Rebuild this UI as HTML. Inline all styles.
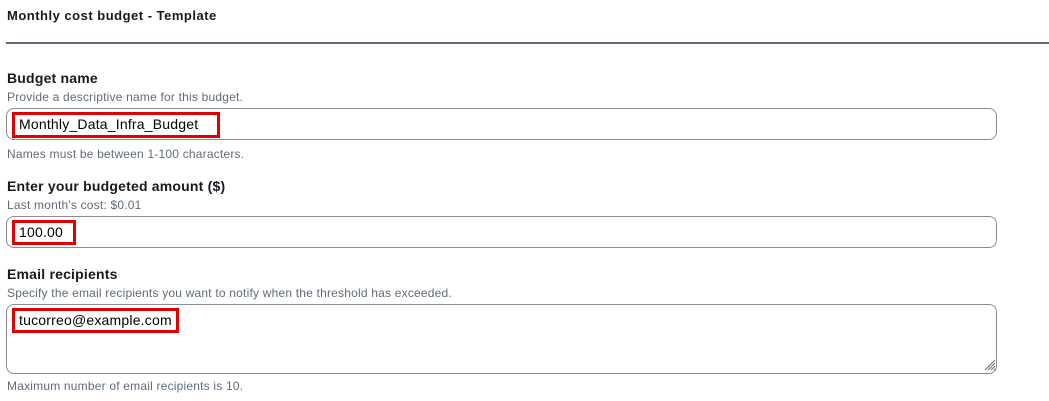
<!DOCTYPE html>
<html><head><style>
body{margin:0;width:1049px;height:401px;background:#fff;font-family:"Liberation Sans",Arial,sans-serif;color:#16191f;position:relative;overflow:hidden}
.a{position:absolute;white-space:nowrap}
.t{font-weight:bold;font-size:13px;letter-spacing:0.5px}
.l{font-weight:bold;font-size:14px;letter-spacing:0.2px}
.d{font-size:12px;color:#5f6b7a;letter-spacing:0.2px}
.in{position:absolute;left:6px;width:991px;border:1px solid #8c8c94;border-radius:8px;box-sizing:border-box}
.r{position:absolute;border:3px solid #e00000;box-sizing:border-box}
.v{font-size:14px;color:#000;letter-spacing:0.2px}
</style></head><body>
<div class="a t" style="left:7px;top:8px">Monthly cost budget - Template</div>
<div class="a" style="left:6px;top:42px;width:1043px;height:2px;background:#5f6b7a"></div>

<div class="a l" style="left:7px;top:70px">Budget name</div>
<div class="a d" style="left:7px;top:90px">Provide a descriptive name for this budget.</div>
<div class="in" style="top:108px;height:32px"></div>
<div class="r" style="left:12px;top:112px;width:208px;height:26px"></div>
<div class="a v" style="left:19px;top:116px">Monthly_Data_Infra_Budget</div>
<div class="a d" style="left:7px;top:147px">Names must be between 1-100 characters.</div>

<div class="a l" style="left:7px;top:178px">Enter your budgeted amount ($)</div>
<div class="a d" style="left:7px;top:198px">Last month's cost: $0.01</div>
<div class="in" style="top:216px;height:32px"></div>
<div class="r" style="left:12px;top:220px;width:64px;height:25px"></div>
<div class="a v" style="left:19px;top:224px">100.00</div>

<div class="a l" style="left:7px;top:266px">Email recipients</div>
<div class="a d" style="left:7px;top:286px">Specify the email recipients you want to notify when the threshold has exceeded.</div>
<div class="in" style="top:304px;height:70px"></div>
<div class="r" style="left:12px;top:308px;width:167px;height:25px"></div>
<div class="a v" style="left:19px;top:312px">tucorreo@example.com</div>
<svg class="a" style="left:983px;top:358px" width="13" height="13"><path d="M12 2L2 12M12 5L5 12M12 8L8 12M12 11L11 12" stroke="#6b6b6b" stroke-width="1"/></svg>
<div class="a d" style="left:7px;top:379px">Maximum number of email recipients is 10.</div>
</body></html>
